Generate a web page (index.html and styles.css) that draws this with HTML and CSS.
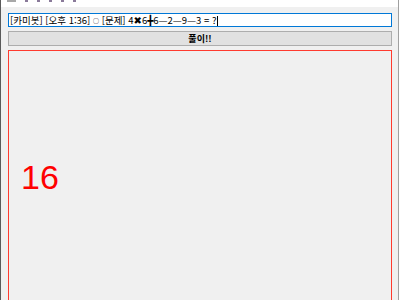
FILE: index.html
```html
<!DOCTYPE html>
<html lang="ko">
<head>
    <meta charset="UTF-8">
    <title>카미봇</title>
    <link rel="stylesheet" href="styles.css">
</head>
<body>
    <div class="window">
        <div class="titlebar">
            <span class="mark gray"></span>
            <span class="mark dot"></span>
            <span class="mark dot"></span>
            <span class="mark dot"></span>
            <span class="mark dot"></span>
            <span class="mark dot"></span>
        </div>
        <div class="client">
            <div class="chat">[카미봇] [오후 1:36] <span class="circle">○</span> [문제] 4<span class="sym">✖</span>6<span class="sym">╋</span>6<span class="dash">—</span>2<span class="dash">—</span>9<span class="dash">—</span>3 = ?<span class="caret"></span></div>
            <button class="solve">풀이!!</button>
            <div class="answer"><span class="result">16</span></div>
        </div>
    </div>
</body>
</html>
```

FILE: styles.css
```css
body {
    margin: 0;
    background-color: #ffffff;
    font-family: "Noto Sans CJK KR", "DejaVu Sans", sans-serif;
    overflow: hidden;
}
.window {
    height: 300px;
    display: flex;
    flex-direction: column;
    border-left: 1px solid #5a5a5a;
    border-right: 1px solid #a0a0a0;
    margin-right: 1px;
    overflow: hidden;
}
.titlebar {
    flex-shrink: 0;
    height: 7px;
    background: #ffffff;
    display: flex;
    align-items: flex-start;
    gap: 9px;
    padding-left: 6px;
}
.mark {
    height: 2px;
}
.mark.gray {
    width: 9px;
    background: #a8a8a8;
}
.mark.dot {
    width: 3px;
    background: #8a7a9a;
}
.client {
    flex-shrink: 0;
    background-color: #f0f0f0;
    padding: 6px 6px 0 7px;
    display: flex;
    flex-direction: column;
    gap: 4px;
}
.chat {
    flex-shrink: 0;
    height: 12px;
    border: 1px solid #0078d7;
    background: #ffffff;
    font-size: 9.5px;
    line-height: 12px;
    padding: 0 1px;
    white-space: nowrap;
    overflow: hidden;
    color: #000;
}
.circle {
    font-size: 6px;
    vertical-align: 1px;
}
.sym {
    font-family: "DejaVu Sans", sans-serif;
    font-size: 10px;
}
.dash {
    font-family: "DejaVu Sans", sans-serif;
    font-size: 9px;
}
.caret {
    display: inline-block;
    width: 1px;
    height: 11px;
    margin-left: 1px;
    background: #000;
    vertical-align: middle;
}
.solve {
    flex-shrink: 0;
    height: 15px;
    padding: 0;
    border: 1px solid #adadad;
    background: #e1e1e1;
    font-family: inherit;
    font-size: 9px;
    font-weight: bold;
    line-height: 12px;
    color: #000;
}
.answer {
    flex-shrink: 0;
    height: 252px;
    border: 1px solid #ff3b2f;
    background: #f0f0f0;
    display: flex;
    align-items: center;
    padding-left: 12px;
}
.result {
    color: #ff0000;
    font-family: "Liberation Sans", Arial, sans-serif;
    font-size: 34px;
}
```
